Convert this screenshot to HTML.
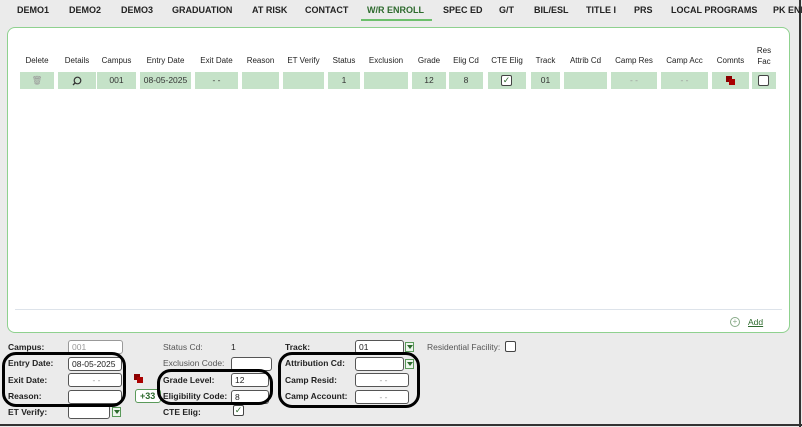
<!DOCTYPE html>
<html><head><style>
*{box-sizing:border-box;margin:0;padding:0}
body{width:802px;height:427px;background:#ebebeb;font-family:"Liberation Sans",sans-serif;position:relative;overflow:hidden;color:#222}
.a{position:absolute;white-space:nowrap}
.tab{position:absolute;top:5px;font-size:9px;font-weight:bold;color:#222;white-space:nowrap}
.panel{position:absolute;left:7px;top:27px;width:783px;height:306px;background:#fff;border:1px solid #8fd18f;border-radius:8px}
.h{position:absolute;top:56px;font-size:8px;text-align:center;color:#222;white-space:nowrap}
.c{position:absolute;top:72px;height:17px;background:#c5e2c8;font-size:8.5px;text-align:center;line-height:17px;color:#333}
.l{position:absolute;font-size:8.5px;font-weight:bold;color:#222;white-space:nowrap}
.lg{position:absolute;font-size:8.5px;color:#555;white-space:nowrap}
.in{position:absolute;height:14px;background:#fff;border:1px solid #555;border-radius:3px;font-size:8.5px;line-height:12px;padding-left:3px}
.dd{position:absolute;width:9px;height:10px;border:1px solid #5a9a5a;background:#eef6ee}
.dd:after{content:"";position:absolute;left:1px;top:2px;border-left:3px solid transparent;border-right:3px solid transparent;border-top:4px solid #2d6a2d}
.ov{position:absolute;border:3px solid #000;border-radius:14px}
.cb{position:absolute;width:11px;height:11px;border:1px solid #444;border-radius:2px;background:#fff}
</style></head><body>
<div style="position:absolute;right:1px;top:0;width:2px;height:427px;background:#333"></div>
<div style="position:absolute;left:0;bottom:1px;width:802px;height:2px;background:#333"></div>
<div class="tab" style="left:17px">DEMO1</div>
<div class="tab" style="left:69px">DEMO2</div>
<div class="tab" style="left:121px">DEMO3</div>
<div class="tab" style="left:172px">GRADUATION</div>
<div class="tab" style="left:252px">AT RISK</div>
<div class="tab" style="left:305px">CONTACT</div>
<div class="tab" style="left:367px;color:#2d6a2d">W/R ENROLL</div>
<div class="a" style="left:361px;top:19px;width:71px;height:2px;background:#6cbf6c"></div>
<div class="tab" style="left:443px">SPEC ED</div>
<div class="tab" style="left:499px">G/T</div>
<div class="tab" style="left:534px">BIL/ESL</div>
<div class="tab" style="left:586px">TITLE I</div>
<div class="tab" style="left:634px">PRS</div>
<div class="tab" style="left:671px">LOCAL PROGRAMS</div>
<div class="tab" style="left:773px">PK ENR</div>
<div class="panel"></div>
<div class="h" style="left:20px;width:34px">Delete</div>
<div class="h" style="left:58px;width:38px">Details</div>
<div class="h" style="left:97px;width:39px">Campus</div>
<div class="h" style="left:140px;width:51px">Entry Date</div>
<div class="h" style="left:195px;width:43px">Exit Date</div>
<div class="h" style="left:242px;width:37px">Reason</div>
<div class="h" style="left:283px;width:41px">ET Verify</div>
<div class="h" style="left:328px;width:32px">Status</div>
<div class="h" style="left:364px;width:44px">Exclusion</div>
<div class="h" style="left:412px;width:34px">Grade</div>
<div class="h" style="left:449px;width:34px">Elig Cd</div>
<div class="h" style="left:488px;width:38px">CTE Elig</div>
<div class="h" style="left:531px;width:29px">Track</div>
<div class="h" style="left:564px;width:43px">Attrib Cd</div>
<div class="h" style="left:611px;width:46px">Camp Res</div>
<div class="h" style="left:661px;width:47px">Camp Acc</div>
<div class="h" style="left:712px;width:37px">Comnts</div>
<div class="h" style="left:752px;width:24px;top:45px;line-height:11px">Res<br>Fac</div>
<div class="c" style="left:20px;width:34px;color:#999">&#128465;</div>
<div class="c" style="left:58px;width:38px"><svg width="10" height="10" viewBox="0 0 10 10" style="margin-top:4px"><circle cx="5.5" cy="4.5" r="3.3" fill="none" stroke="#333" stroke-width="1.2"/><line x1="3" y1="7" x2="1" y2="9" stroke="#333" stroke-width="1.3"/></svg></div>
<div class="c" style="left:97px;width:39px">001</div>
<div class="c" style="left:140px;width:51px">08-05-2025</div>
<div class="c" style="left:195px;width:43px">- -</div>
<div class="c" style="left:242px;width:37px"></div>
<div class="c" style="left:283px;width:41px"></div>
<div class="c" style="left:328px;width:32px">1</div>
<div class="c" style="left:364px;width:44px"></div>
<div class="c" style="left:412px;width:34px">12</div>
<div class="c" style="left:449px;width:34px">8</div>
<div class="c" style="left:488px;width:38px"><div class="cb" style="left:13px;top:3px;font-size:9px;line-height:9px;color:#2d6a2d">✓</div></div>
<div class="c" style="left:531px;width:29px">01</div>
<div class="c" style="left:564px;width:43px"></div>
<div class="c" style="left:611px;width:46px;color:#999">- -</div>
<div class="c" style="left:661px;width:47px;color:#999">- -</div>
<div class="c" style="left:712px;width:37px"><div class="a" style="left:14px;top:4px;width:6px;height:6px;background:#8b0000"></div><div class="a" style="left:17px;top:7px;width:6px;height:6px;background:#a00"></div></div>
<div class="c" style="left:752px;width:24px"><div class="cb" style="left:6px;top:3px"></div></div>
<div class="a" style="left:15px;top:309px;width:767px;height:1px;background:#dde3ea"></div>
<div class="a" style="left:730px;top:317px;width:10px;height:10px;border:1px solid #8a8;border-radius:50%;font-size:8px;line-height:8px;text-align:center;color:#8a8">+</div>
<div class="a" style="left:748px;top:317px;font-size:8.5px;color:#2d6a2d;text-decoration:underline">Add</div>

<div class="l" style="left:8px;top:342px">Campus:</div>
<div class="in" style="left:68px;top:340px;width:55px;border-color:#999;color:#999">001</div>
<div class="l" style="left:8px;top:358px">Entry Date:</div>
<div class="in" style="left:68px;top:357px;width:54px">08-05-2025</div>
<div class="l" style="left:8px;top:375px">Exit Date:</div>
<div class="in" style="left:68px;top:373px;width:54px;text-align:center;color:#999">- -</div>
<div class="l" style="left:8px;top:391px">Reason:</div>
<div class="in" style="left:68px;top:390px;width:54px"></div>
<div class="l" style="left:8px;top:407px">ET Verify:</div>
<div class="in" style="left:68px;top:405px;width:42px"></div>
<div class="dd" style="left:112px;top:407px"></div>
<div class="a" style="left:134px;top:374px;width:6px;height:6px;background:#8b0000"></div>
<div class="a" style="left:137px;top:377px;width:6px;height:6px;background:#a00"></div>
<div class="a" style="left:135px;top:389px;width:26px;height:14px;border:1px solid #5a9a5a;border-radius:3px;background:#fff;font-size:9px;font-weight:bold;color:#2d6a2d;padding-left:4px;line-height:12px">+33</div>

<div class="lg" style="left:163px;top:342px">Status Cd:</div>
<div class="lg" style="left:231px;top:342px;color:#222">1</div>
<div class="lg" style="left:163px;top:358px">Exclusion Code:</div>
<div class="in" style="left:231px;top:357px;width:41px"></div>
<div class="l" style="left:163px;top:375px">Grade Level:</div>
<div class="in" style="left:231px;top:373px;width:38px">12</div>
<div class="l" style="left:163px;top:391px">Eligibility Code:</div>
<div class="in" style="left:231px;top:390px;width:38px">8</div>
<div class="l" style="left:163px;top:407px">CTE Elig:</div>
<div class="cb" style="left:233px;top:405px;font-size:9px;line-height:9px;color:#2d6a2d;text-align:center">✓</div>

<div class="l" style="left:285px;top:342px">Track:</div>
<div class="in" style="left:355px;top:340px;width:49px">01</div>
<div class="dd" style="left:405px;top:342px"></div>
<div class="l" style="left:285px;top:358px">Attribution Cd:</div>
<div class="in" style="left:355px;top:357px;width:49px"></div>
<div class="dd" style="left:405px;top:359px"></div>
<div class="l" style="left:285px;top:375px">Camp Resid:</div>
<div class="in" style="left:355px;top:373px;width:54px;text-align:center;color:#999">- -</div>
<div class="l" style="left:285px;top:391px">Camp Account:</div>
<div class="in" style="left:355px;top:390px;width:54px;text-align:center;color:#999">- -</div>
<div class="lg" style="left:427px;top:342px">Residential Facility:</div>
<div class="cb" style="left:505px;top:341px"></div>

<div class="ov" style="left:2px;top:352px;width:124px;height:55px"></div>
<div class="ov" style="left:157px;top:369px;width:116px;height:36px"></div>
<div class="ov" style="left:278px;top:352px;width:142px;height:56px"></div>
</body></html>
